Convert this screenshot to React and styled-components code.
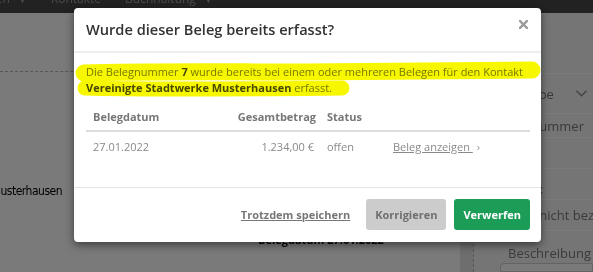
import React from "react";
import styled, { createGlobalStyle } from "styled-components";

const Global = createGlobalStyle`
  html, body { margin: 0; padding: 0; }
  body {
    font-family: "Open Sans", "Noto Sans", sans-serif;
    background: #fff;
    width: 593px;
    height: 272px;
    overflow: hidden;
  }
  * { box-sizing: border-box; }
`;

const Page = styled.div`
  position: relative;
  width: 593px;
  height: 272px;
  display: flex;
  flex-direction: column;
  background: #fff;
  overflow: hidden;
`;

const NavBar = styled.nav`
  flex: none;
  height: 13px;
  background: #474747;
  overflow: hidden;
`;

const NavList = styled.ul`
  list-style: none;
  margin: -11px 0 0 -60px;
  padding: 0;
  display: flex;
  gap: 24px;
`;

const NavItem = styled.li`
  font-size: 12px;
  line-height: 20px;
  color: #9c9c9c;
  white-space: nowrap;
`;

const NavCaret = styled.span`
  margin-left: 8px;
  font-size: 9px;
`;

const Main = styled.div`
  flex: 1;
  display: flex;
  min-height: 0;
`;

const LeftArea = styled.section`
  flex: 1;
  padding-top: 58px;
`;

const Section = styled.div`
  border-top: 1px dashed #b4b4b4;
  display: flex;
  align-items: flex-start;
`;

const NameCol = styled.div`
  width: 62px;
  flex: none;
  display: flex;
  justify-content: flex-end;
  overflow: hidden;
  padding-top: 110px;
`;

const CompanyName = styled.span`
  font-family: "DejaVu Sans Condensed", "DejaVu Sans", sans-serif;
  font-stretch: condensed;
  font-size: 12px;
  line-height: 18px;
  letter-spacing: -0.5px;
  color: #000;
  white-space: nowrap;
`;

const DetailCol = styled.div`
  padding: 161px 0 0 196px;
  font-size: 11px;
  line-height: 14px;
  font-weight: 700;
  color: #111;
  white-space: nowrap;
`;

const Strip = styled.div`
  width: 13px;
  flex: none;
  background: #e6e6e6;
`;

const RightPanel = styled.aside`
  width: 120px;
  flex: none;
  border-left: 1px dashed #b4b4b4;
  background: #f4f4f4;
  padding: 60px 0 0 24px;
  display: flex;
  flex-direction: column;
  color: #7a7a7a;
  font-size: 13px;
`;

const FieldRow = styled.div`
  height: ${(p) => p.$h}px;
  flex: none;
  border-top: 1px solid #ffffff;
  display: flex;
  align-items: ${(p) => (p.$bottom ? "flex-end" : "center")};
  justify-content: space-between;
  padding: 0 ${(p) => p.$pr || 0}px ${(p) => (p.$bottom ? 1 : 0)}px ${(p) => p.$pl || 0}px;
  white-space: nowrap;
  overflow: hidden;
  line-height: 18px;
`;

const TextArea = styled.div`
  margin-left: 2px;
  height: 20px;
  border: 1px solid #cfcfcf;
  border-radius: 4px 0 0 0;
  background: #fff;
`;

const Overlay = styled.div`
  position: absolute;
  inset: 0;
  background: rgba(0, 0, 0, 0.52);
`;

const Modal = styled.div`
  position: absolute;
  left: 74px;
  top: 8px;
  width: 467px;
  background: #fff;
  border-radius: 4px;
  box-shadow: 0 3px 9px rgba(0, 0, 0, 0.5);
  display: flex;
  flex-direction: column;
`;

const Header = styled.header`
  height: 45px;
  display: flex;
  align-items: center;
  justify-content: space-between;
  padding: 0 13px 0 12px;
  border-bottom: 2px solid #eeeeee;
`;

const Title = styled.h2`
  margin: 0 0 1px;
  font-size: 14.6px;
  line-height: 20px;
  font-weight: 600;
  color: #333;
`;

const Close = styled.button`
  border: 0;
  background: none;
  padding: 0;
  margin-bottom: 11px;
  display: flex;
  cursor: pointer;
`;

const Body = styled.div`
  padding: 11px 11px 26px 12px;
`;

const Message = styled.p`
  position: relative;
  margin: 0 0 6px;
  font-size: 11px;
  line-height: 16px;
  white-space: nowrap;
  color: #7c7c7c;
  b { color: #4a4a4a; font-weight: 700; }
`;

const Marker = styled.svg`
  position: absolute;
  left: 0;
  top: 0;
  width: 100%;
  height: 100%;
  overflow: visible;
  pointer-events: none;
  mix-blend-mode: multiply;
`;

const Table = styled.table`
  width: 100%;
  border-collapse: collapse;
  table-layout: fixed;
  font-size: 11px;
`;

const Th = styled.th`
  width: ${(p) => p.$w}px;
  height: 29px;
  padding: 0 ${(p) => p.$pr || 0}px 0 ${(p) => p.$pl || 0}px;
  text-align: ${(p) => p.$align || "left"};
  font-weight: 700;
  color: #777;
  border-bottom: 2px solid #dddddd;
  white-space: nowrap;
`;

const Td = styled.td`
  height: 30px;
  padding: 0 ${(p) => p.$pr || 0}px 0 ${(p) => p.$pl || 0}px;
  text-align: ${(p) => p.$align || "left"};
  color: #8a8a8a;
  white-space: nowrap;
`;

const DocLink = styled.a`
  color: #8a8a8a;
  text-decoration: underline;
  cursor: pointer;
`;

const Chevron = styled.span`
  margin-left: 4px;
  font-size: 11px;
  color: #999;
`;

const Footer = styled.footer`
  height: 55px;
  display: flex;
  align-items: center;
  justify-content: flex-end;
  gap: 8px;
  padding: 0 11px 1px;
  border-top: 1px solid #e6e6e6;
`;

const TextButton = styled.a`
  margin-right: 8px;
  font-size: 11px;
  font-weight: 700;
  color: #777;
  text-decoration: underline;
  cursor: pointer;
`;

const Button = styled.button`
  height: 31px;
  padding: 0 ${(p) => p.$px}px;
  border: 0;
  border-radius: 3px;
  font-family: inherit;
  font-size: 11px;
  font-weight: 700;
  background: ${(p) => (p.$primary ? "#1b9d58" : "#cccccc")};
  color: ${(p) => (p.$primary ? "#fff" : "#6f6f6f")};
  cursor: pointer;
`;

export default function App() {
  return (
    <>
      <Global />
      <Page>
        <NavBar>
          <NavList>
            <NavItem>Rechnungen<NavCaret>▼</NavCaret></NavItem>
            <NavItem>Kontakte</NavItem>
            <NavItem>Buchhaltung<NavCaret>▼</NavCaret></NavItem>
          </NavList>
        </NavBar>
        <Main>
          <LeftArea>
            <Section>
              <NameCol>
                <CompanyName>Vereinigte Stadtwerke Musterhausen</CompanyName>
              </NameCol>
              <DetailCol>Belegdatum 27.01.2022</DetailCol>
            </Section>
          </LeftArea>
          <Strip />
          <RightPanel>
            <FieldRow $h={40} $pl={4} $pr={6}>
              <span>Ausgabe</span>
              <svg width="11" height="7" viewBox="0 0 11 7">
                <path d="M0.5 0.8 L5.5 5.8 L10.5 0.8" fill="none" stroke="#8a8a8a" strokeWidth="1.3" />
              </svg>
            </FieldRow>
            <FieldRow $h={24}>
              <span>Belegnummer</span>
            </FieldRow>
            <FieldRow $h={31} />
            <FieldRow $h={31} $pl={4} $bottom>
              <span>Status:</span>
            </FieldRow>
            <FieldRow $h={31} $pl={8}>
              <span>noch nicht bezahlt</span>
            </FieldRow>
            <FieldRow $h={33} $pl={10} $bottom>
              <span>Beschreibung</span>
            </FieldRow>
            <TextArea />
          </RightPanel>
        </Main>
        <Overlay />
        <Modal role="dialog" aria-labelledby="dlg-title">
          <Header>
            <Title id="dlg-title">Wurde dieser Beleg bereits erfasst?</Title>
            <Close aria-label="Schließen">
              <svg width="9" height="9" viewBox="0 0 9 9">
                <path d="M1 1 L8 8 M8 1 L1 8" stroke="#9a9a9a" strokeWidth="2.4" strokeLinecap="square" />
              </svg>
            </Close>
          </Header>
          <Body>
            <Message>
              Die Belegnummer <b>7</b> wurde bereits bei einem oder mehreren Belegen für den Kontakt
              <br />
              <b>Vereinigte Stadtwerke Musterhausen</b> erfasst.
              <Marker aria-hidden="true">
                <path
                  d="M-2 9 C 60 7, 140 8, 220 8 S 380 7, 446 6"
                  fill="none"
                  stroke="#f7f700"
                  strokeWidth="17"
                  strokeLinecap="round"
                />
                <path
                  d="M-1 24 C 60 26, 150 25, 256 24"
                  fill="none"
                  stroke="#f7f700"
                  strokeWidth="15"
                  strokeLinecap="round"
                />
              </Marker>
            </Message>
            <Table>
              <thead>
                <tr>
                  <Th $w={145} $pl={7}>Belegdatum</Th>
                  <Th $w={96} $pr={11} $align="right">Gesamtbetrag</Th>
                  <Th $w={59}>Status</Th>
                  <Th $w={144} $pl={7} />
                </tr>
              </thead>
              <tbody>
                <tr>
                  <Td $pl={7}>27.01.2022</Td>
                  <Td $pr={13} $align="right">1.234,00 €</Td>
                  <Td>offen</Td>
                  <Td $pl={7}>
                    <DocLink>Beleg anzeigen </DocLink>
                    <Chevron>›</Chevron>
                  </Td>
                </tr>
              </tbody>
            </Table>
          </Body>
          <Footer>
            <TextButton>Trotzdem speichern</TextButton>
            <Button $px={9}>Korrigieren</Button>
            <Button $px={9} $primary>Verwerfen</Button>
          </Footer>
        </Modal>
      </Page>
    </>
  );
}
